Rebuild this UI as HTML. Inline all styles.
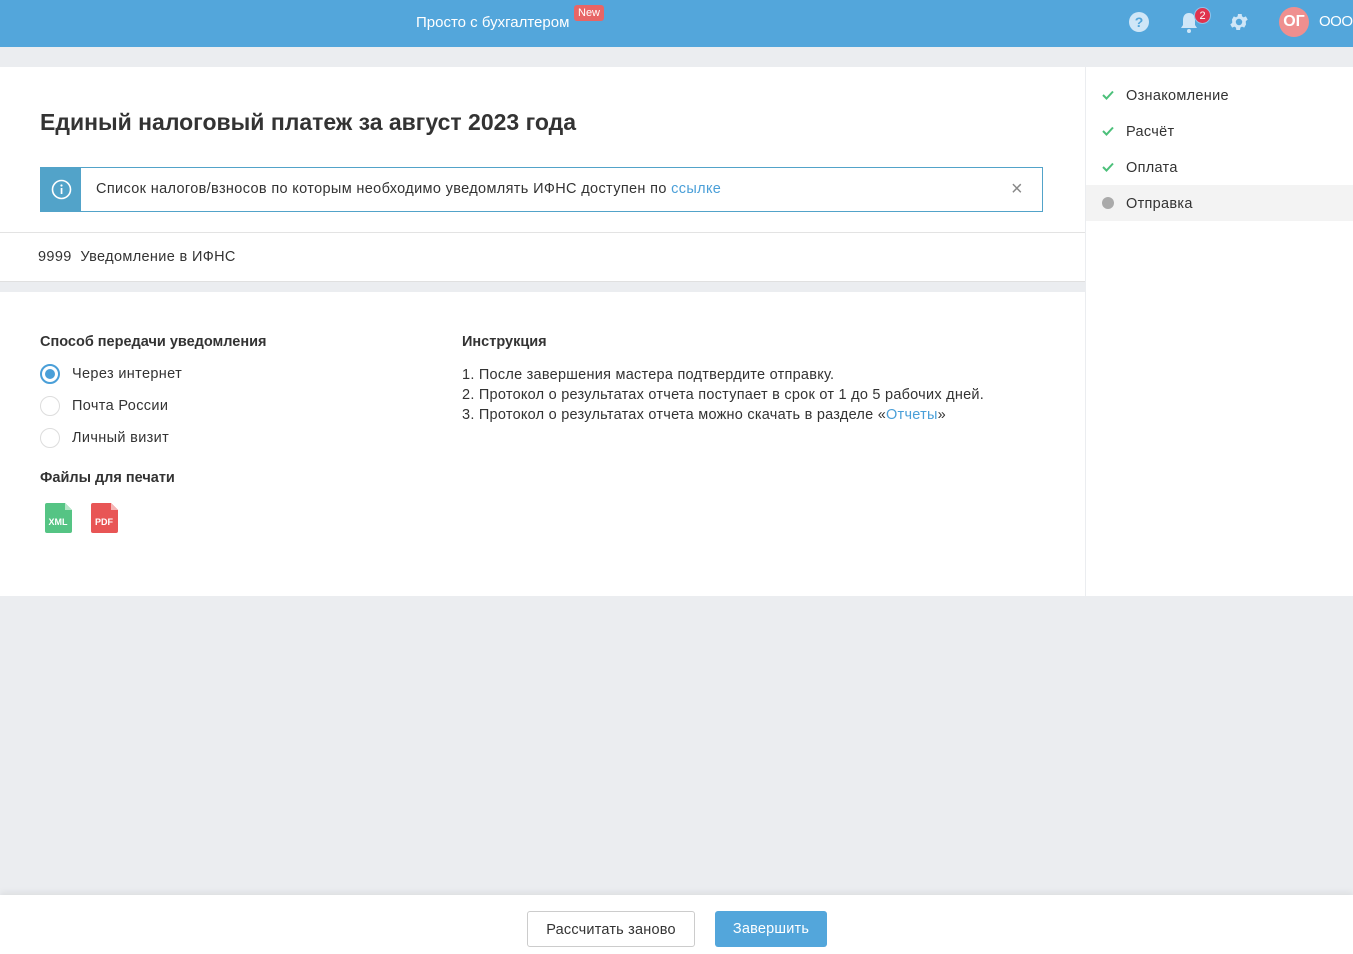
<!DOCTYPE html>
<html><head><meta charset="utf-8"><style>
*{box-sizing:border-box;margin:0;padding:0}
body{width:1353px;height:954px;background:#ebedf0;font-family:"Liberation Sans",sans-serif;color:#333;position:relative;overflow:hidden;font-size:14px}
.hdr{position:absolute;left:0;top:0;width:1353px;height:47px;background:#53a6db}
.abs{position:absolute}
.t{font-size:14.5px;letter-spacing:0.35px}
.main{position:absolute;left:0;top:67px;width:1085px;height:529px;background:#fff}
.side{position:absolute;left:1086px;top:67px;width:267px;height:529px;background:#fff}
.step{position:absolute;left:0;width:267px;height:36px;line-height:38px;padding-left:40px;font-size:14.5px;letter-spacing:0.3px;color:#333}
.radio{position:absolute;left:40px;width:20px;height:20px;border-radius:50%;border:1px solid #ddd;background:#fff}
</style></head><body>
<div class="hdr">
 <div class="abs" style="left:416px;top:14px;color:#fff;font-size:15px">Просто с бухгалтером</div>
 <div class="abs" style="left:574px;top:5px;background:#e86565;color:#fff;font-size:11px;padding:1px 4px;border-radius:3px;line-height:14px">New</div>
 <svg class="abs" style="left:1128px;top:11px" width="22" height="22"><circle cx="11" cy="11" r="10" fill="#cfe6f7"/><text x="11" y="16" text-anchor="middle" font-size="14" font-weight="bold" fill="#53a6db" font-family="Liberation Sans">?</text></svg>
 <svg class="abs" style="left:1178px;top:11px" width="22" height="24"><path d="M11 2c-4 0-6 3-6 7v5l-2 3h16l-2-3V9c0-4-2-7-6-7z" fill="#cfe6f7"/><circle cx="11" cy="20" r="2" fill="#cfe6f7"/></svg>
 <div class="abs" style="left:1194px;top:7px;width:17px;height:17px;border-radius:50%;background:#e0334e;color:#fff;font-size:11px;text-align:center;line-height:17px;border:1px solid #8fc3ea">2</div>
 <svg class="abs" style="left:1228px;top:11px" width="22" height="22" viewBox="0 0 24 24"><path fill="#cfe6f7" d="M19.4 13a7.5 7.5 0 000-2l2.1-1.6-2-3.5-2.5 1a7 7 0 00-1.7-1l-.4-2.6h-4l-.4 2.6a7 7 0 00-1.7 1l-2.5-1-2 3.5L4.6 11a7.5 7.5 0 000 2l-2.1 1.6 2 3.5 2.5-1a7 7 0 001.7 1l.4 2.6h4l.4-2.6a7 7 0 001.7-1l2.5 1 2-3.5zM12 15.5a3.5 3.5 0 110-7 3.5 3.5 0 010 7z"/></svg>
 <div class="abs" style="left:1279px;top:7px;width:30px;height:30px;border-radius:50%;background:#ef8f8f;color:#fff;font-weight:bold;font-size:16px;text-align:center;line-height:30px">ОГ</div>
 <div class="abs" style="left:1319px;top:13px;color:#fff;font-size:15px;letter-spacing:-0.5px">ООО</div>
</div>
<div class="main">
 <div class="abs" style="left:40px;top:42px;font-size:23px;font-weight:bold;color:#333">Единый налоговый платеж за август 2023 года</div>
 <div class="abs" style="left:40px;top:100px;width:1003px;height:45px;border:1px solid #52a3c9">
  <div class="abs" style="left:-1px;top:-1px;width:41px;height:45px;background:#52a3c9"></div>
  <svg class="abs" style="left:10px;top:11px" width="21" height="21"><circle cx="10.5" cy="10.5" r="9" fill="none" stroke="#fff" stroke-width="1.6"/><rect x="9.7" y="9" width="1.7" height="6" fill="#fff"/><circle cx="10.5" cy="6.5" r="1.1" fill="#fff"/></svg>
  <div class="abs t" style="left:55px;top:13px;color:#333">Список налогов/взносов по которым необходимо уведомлять ИФНС доступен по <span style="color:#4a9fd8">ссылке</span></div>
  <div class="abs" style="left:970px;top:10px;font-size:20px;color:#888">×</div>
 </div>
 <div class="abs" style="left:0;top:165px;width:1085px;height:1px;background:#e3e3e3"></div>
 <div class="abs t" style="left:38px;top:182px">9999&nbsp;&nbsp;Уведомление в ИФНС</div>
 <div class="abs" style="left:0;top:214px;width:1085px;height:11px;background:#ebedf0;border-top:1px solid #e0e0e0"></div>
 <div class="abs" style="left:40px;top:267px;font-weight:bold;font-size:14.5px">Способ передачи уведомления</div>
 <div class="radio" style="top:297px;border:2px solid #4a9fd8"><div style="position:absolute;left:3px;top:3px;width:10px;height:10px;border-radius:50%;background:#4a9fd8"></div></div>
 <div class="abs t" style="left:72px;top:299px">Через интернет</div>
 <div class="radio" style="top:329px"></div>
 <div class="abs t" style="left:72px;top:331px">Почта России</div>
 <div class="radio" style="top:361px"></div>
 <div class="abs t" style="left:72px;top:363px">Личный визит</div>
 <div class="abs" style="left:40px;top:403px;font-weight:bold;font-size:14.5px">Файлы для печати</div>
 <svg class="abs" style="left:45px;top:436px" width="27" height="30"><path d="M2 0h18l7 7v21a2 2 0 01-2 2H2a2 2 0 01-2-2V2a2 2 0 012-2z" fill="#55c484"/><path d="M20 0l7 7h-7z" fill="#b5e6c8"/><text x="13" y="22" text-anchor="middle" font-size="9" font-weight="bold" fill="#fff" font-family="Liberation Sans">XML</text></svg>
 <svg class="abs" style="left:91px;top:436px" width="27" height="30"><path d="M2 0h18l7 7v21a2 2 0 01-2 2H2a2 2 0 01-2-2V2a2 2 0 012-2z" fill="#e85555"/><path d="M20 0l7 7h-7z" fill="#f5b5b5"/><text x="13" y="22" text-anchor="middle" font-size="9" font-weight="bold" fill="#fff" font-family="Liberation Sans">PDF</text></svg>
 <div class="abs" style="left:462px;top:267px;font-weight:bold;font-size:14.5px">Инструкция</div>
 <div class="abs t" style="left:462px;top:298px;line-height:20px;letter-spacing:0.25px">1. После завершения мастера подтвердите отправку.<br>2. Протокол о результатах отчета поступает в срок от 1 до 5 рабочих дней.<br>3. Протокол о результатах отчета можно скачать в разделе «<span style="color:#4a9fd8">Отчеты</span>»</div>
</div>
<div class="side">
 <div class="step" style="top:10px">Ознакомление</div>
 <div class="step" style="top:46px">Расчёт</div>
 <div class="step" style="top:82px">Оплата</div>
 <div class="step" style="top:118px;background:#f3f3f3">Отправка</div>
 <svg class="abs" style="left:16px;top:23px" width="12" height="10"><path d="M1 5l3.5 3.5L11 1.5" fill="none" stroke="#4cc07a" stroke-width="2"/></svg>
 <svg class="abs" style="left:16px;top:59px" width="12" height="10"><path d="M1 5l3.5 3.5L11 1.5" fill="none" stroke="#4cc07a" stroke-width="2"/></svg>
 <svg class="abs" style="left:16px;top:95px" width="12" height="10"><path d="M1 5l3.5 3.5L11 1.5" fill="none" stroke="#4cc07a" stroke-width="2"/></svg>
 <div class="abs" style="left:16px;top:130px;width:12px;height:12px;border-radius:50%;background:#aaa"></div>
</div>
<div class="abs" style="left:0;top:895px;width:1353px;height:59px;background:#fff;box-shadow:0 -3px 6px rgba(0,0,0,0.06)">
 <div class="abs t" style="left:527px;top:16px;width:168px;height:36px;border:1px solid #ccc;border-radius:3px;text-align:center;line-height:36px;letter-spacing:0.2px">Рассчитать заново</div>
 <div class="abs t" style="left:715px;top:16px;width:112px;height:36px;background:#53a6db;border-radius:3px;text-align:center;line-height:37px;color:#fff;letter-spacing:0.2px">Завершить</div>
</div>
</body></html>
